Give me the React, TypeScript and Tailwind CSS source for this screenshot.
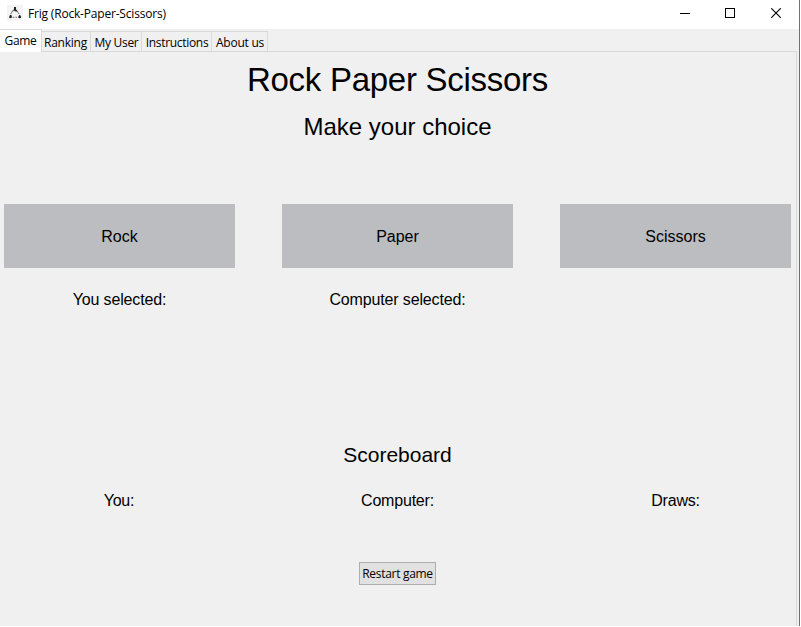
import React from "react";

const UI = "font-['Open_Sans','Noto_Sans',sans-serif]";

const tabs = [
  { name: "Ranking", box: "w-[49px] pr-px", text: "tracking-[-0.25px]" },
  { name: "My User", box: "w-[51px] pl-px", text: "tracking-[-0.3px]" },
  { name: "Instructions", box: "w-[70px] pl-px", text: "tracking-[-0.3px]" },
  { name: "About us", box: "w-[56px] pl-px", text: "tracking-[-0.25px]" },
];

function AppIcon() {
  return (
    <svg width="16" height="16" viewBox="0 0 16 16" className="shrink-0 bg-[#f4f4f4]">
      <path d="M7 2h2v2.4l1 .6v1.4H8.400l-.6-.8-1.400.8V4.800l.6-.6z" fill="#222" />
      <path d="M3 9.800l1.600.5.400 2-1.200 1-2-.7.600-1.100zM12.600 9.800l1.300 1.200.2 1.800-1.600.5-1.500-.9.5-1.100z" fill="#222" />
      <path d="M5.800 5.500L3.800 9M9.800 5.500l2.400 3.800" stroke="#444" strokeDasharray="1.600 .6" fill="none" />
      <path d="M5.500 12.300h4.500" stroke="#777" strokeDasharray="2 1" fill="none" />
    </svg>
  );
}

function TitleBar() {
  return (
    <header className="flex h-[29px] items-center bg-white pl-[7px] pb-[3px]">
      <AppIcon />
      <span className="ml-[5px] mt-[2px] text-[12px] leading-4 tracking-[-0.19px] whitespace-nowrap">
        Frig (Rock-Paper-Scissors)
      </span>
      <div className="ml-auto flex pr-[18px]">
        <svg width="10" height="10" viewBox="0 0 10 10" className="mr-[35px]">
          <path d="M0 5.5h10" stroke="#000" />
        </svg>
        <svg width="10" height="10" viewBox="0 0 10 10" className="mr-[36px]">
          <rect x=".5" y=".5" width="9" height="9" fill="none" stroke="#000" />
        </svg>
        <svg width="10" height="10" viewBox="0 0 10 10">
          <path d="M.2.2l9.6 9.6M9.8.2L.2 9.8" stroke="#000" strokeWidth="1.1" />
        </svg>
      </div>
    </header>
  );
}

function TabBar() {
  return (
    <nav className="flex h-[23px] items-end text-[12px] leading-4 whitespace-nowrap">
      <div className="flex h-[23px] w-[42px] justify-center border-t border-r border-[#d9d9d9] bg-white pt-[3px] tracking-[-0.3px]">
        Game
      </div>
      {tabs.map((t) => (
        <div
          key={t.name}
          className={`flex h-[21px] shrink-0 justify-center border-t border-r border-b border-[#d9d9d9] pt-[3px] ${t.box} ${t.text}`}
        >
          {t.name}
        </div>
      ))}
      <div className="mr-[2px] h-px grow bg-[#d9d9d9]" />
    </nav>
  );
}

export default function App() {
  return (
    <div className="h-[627px] w-[801px] bg-white pr-px pb-px">
      <div className={`flex h-full overflow-hidden border-r border-[#707070] bg-[#f0f0f0] text-black ${UI}`}>
        <div className="flex w-[799px] flex-col">
          <TitleBar />
          <TabBar />
          <main className="mr-[2px] flex grow flex-col border-r border-[#d9d9d9] pl-1 font-['Liberation_Sans',Arial,sans-serif] text-[16px] leading-5">
            <div className="flex w-[787px] flex-col">
              <h1 className="mt-[8px] text-center text-[33px] leading-10 tracking-[-0.27px]">
                Rock Paper Scissors
              </h1>
              <h2 className="mt-[12px] text-center text-[24px] leading-[30px]">Make your choice</h2>
              <div className="mt-[62px] grid grid-cols-[231px_231px_231px] justify-between">
                {["Rock", "Paper", "Scissors"].map((c) => (
                  <button key={c} className="h-16 bg-[#bcbdc1] pt-[2px] text-center">
                    {c}
                  </button>
                ))}
              </div>
              <div className="mt-[22px] grid grid-cols-[231px_231px_231px] justify-between text-center tracking-[-0.15px]">
                <span>You selected:</span>
                <span>Computer selected:</span>
              </div>
              <h3 className="mt-[131px] text-center text-[21px] leading-7">Scoreboard</h3>
              <div className="mt-[22px] grid grid-cols-[231px_231px_231px] justify-between text-center tracking-[-0.2px]">
                <span className="pr-px">You:</span>
                <span>Computer:</span>
                <span>Draws:</span>
              </div>
              <button
                className={`mt-[51px] h-[23px] w-[77px] self-center border border-[#adadad] bg-[#e1e1e1] text-[12px] leading-4 tracking-[-0.3px] whitespace-nowrap ${UI}`}
              >
                Restart game
              </button>
            </div>
          </main>
        </div>
      </div>
    </div>
  );
}
